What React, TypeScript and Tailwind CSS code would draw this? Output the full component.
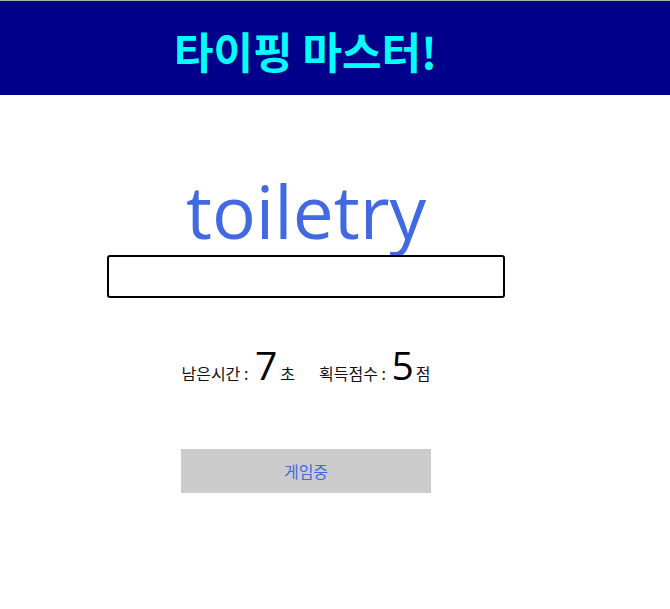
export default function App() {
  const word = 'toiletry';
  const timeLeft = 7;
  const score = 5;

  return (
    <div className="min-h-screen bg-white font-['Noto_Sans','Noto_Sans_CJK_KR',sans-serif]">
      <header className="h-[95px] bg-[#00008b] border-t border-[#a3b5a3]">
        <div className="w-[611px] flex justify-center pt-[21px]">
          <h1 className="text-[43px] font-bold text-[#00ffff] leading-[56px] font-['Noto_Sans_CJK_KR',sans-serif]">
            타이핑 마스터!
          </h1>
        </div>
      </header>

      <main className="w-[612px] flex flex-col items-center">
        <div className="mt-[66px] text-[73px] leading-[100px] text-[#4169e1] font-['Open_Sans',sans-serif]">
          {word}
        </div>
        <input
          type="text"
          className="mt-[-6px] w-[398px] h-[43px] border-2 border-black rounded-[3px] px-2 outline-none"
        />

        <div className="mt-[45px] flex items-baseline text-[16px] text-[#111] font-['Noto_Sans_CJK_KR',sans-serif]">
          <span>남은시간 :&nbsp;</span>
          <span className="text-[39px] leading-[44px] mx-[3px] text-black font-['Open_Sans',sans-serif]">{timeLeft}</span>
          <span>초</span>
          <span className="ml-[24px]">획득점수 :&nbsp;</span>
          <span className="text-[39px] leading-[44px] mx-[2px] text-black font-['Open_Sans',sans-serif]">{score}</span>
          <span>점</span>
        </div>

        <button className="mt-[62px] w-[250px] h-[44px] bg-[#cccccc] text-[#4169e1] text-[16px] font-['Noto_Sans_CJK_KR',sans-serif]">
          게임중
        </button>
      </main>
    </div>
  );
}
